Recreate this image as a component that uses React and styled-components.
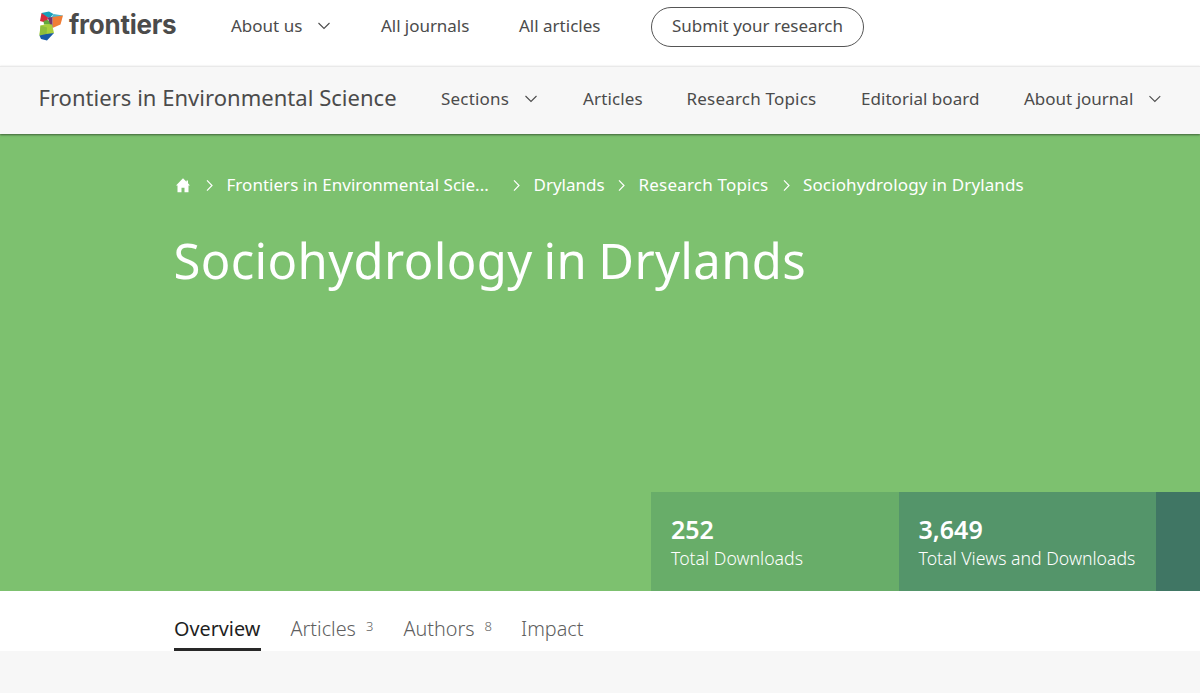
import React from "react";
import styled, { createGlobalStyle } from "styled-components";

const GlobalStyle = createGlobalStyle`
  *, *::before, *::after { box-sizing: border-box; }
  body {
    margin: 0;
    background: #f7f7f7;
    color: #4b4b4b;
    font-family: "Noto Sans", "Open Sans", sans-serif;
    font-size: 17px;
    overflow: hidden;
  }
`;

const Page = styled.div`
  width: 1200px;
  height: 693px;
  overflow: hidden;
  white-space: nowrap;
`;

const TopBar = styled.header`
  display: flex;
  align-items: flex-start;
  height: 66px;
  padding-left: 38px;
  background: #fff;
`;

const Brand = styled.a`
  display: flex;
  align-items: center;
  width: 193px;
  height: 51px;
`;

const BrandName = styled.span`
  margin-left: 6px;
  padding-bottom: 1px;
  font-family: Inter, "Noto Sans", sans-serif;
  font-size: 26px;
  font-weight: 700;
  letter-spacing: -0.25px;
  line-height: 30px;
`;

const NavLink = styled.a`
  display: flex;
  align-items: center;
  flex: none;
  width: ${(p) => p.$width}px;
  height: ${(p) => p.$height || 51}px;
  letter-spacing: ${(p) => p.$track || 0}px;

  svg { margin: 1px 0 0 15px; }
`;

const SubmitButton = styled.a`
  display: flex;
  align-items: center;
  justify-content: center;
  width: 213px;
  height: 40px;
  margin-top: 6.5px;
  padding-bottom: 2px;
  border: 1.5px solid #555;
  border-radius: 20px;
`;

const JournalBar = styled.nav`
  display: flex;
  position: relative;
  height: 68px;
  padding-left: 38.5px;
  border-top: 1px solid #e9e9e9;
  background: #f7f7f7;
  box-shadow: 0 1px 2px rgba(0, 0, 0, 0.5);
`;

const JournalName = styled.a`
  display: flex;
  align-items: center;
  width: 402.5px;
  height: 60px;
  font-size: 22px;
  letter-spacing: 0.03px;
`;

const Hero = styled.section`
  display: flex;
  flex-direction: column;
  justify-content: space-between;
  height: 457px;
  padding-left: 174px;
  background: #7dc16f;
  color: #fff;
`;

const Crumbs = styled.div`
  display: flex;
  align-items: center;
  height: 24px;
  margin-top: 39px;
`;

const Crumb = styled.a`
  width: ${(p) => p.$width}px;
  padding-bottom: 2px;
  letter-spacing: ${(p) => p.$track || 0}px;
`;

const Separator = styled.svg`
  flex: none;
  margin-right: 12.5px;
`;

const Title = styled.h1`
  margin: 29px 0 0 -0.5px;
  font-size: 49px;
  font-weight: 400;
  letter-spacing: 0.35px;
  line-height: 68px;
  word-spacing: -2px;
`;

const Stats = styled.div`
  display: flex;
  height: 99px;
  margin-left: 477px;
`;

const Stat = styled.div`
  flex: none;
  width: ${(p) => p.$width}px;
  padding: 20px 0 0 20px;
  background: ${(p) => p.$color};
`;

const StatValue = styled.div`
  font-size: 25px;
  font-weight: 600;
  line-height: 34px;
`;

const StatLabel = styled.div`
  font-size: 17.7px;
  font-weight: 300;
  line-height: 25px;
`;

const Tabs = styled.div`
  display: flex;
  height: 60px;
  padding-left: 174px;
  background: #fff;
`;

const Tab = styled.a`
  height: 60px;
  width: ${(p) => p.$width}px;
  margin-right: 29.5px;
  border-bottom: ${(p) => (p.$active ? "3px solid #282828" : "0")};
  color: ${(p) => (p.$active ? "#1f1f1f" : "#5f5f5f")};
  font-size: 19.8px;
  font-weight: ${(p) => (p.$active ? 400 : 300)};
  line-height: 75px;
`;

const Count = styled.sup`
  margin-left: 10px;
  font-size: 13px;
  line-height: 0;
  vertical-align: 5px;
`;

const Chevron = () => (
  <svg width="14" height="8" viewBox="0 0 14 8" fill="none" stroke="#4b4b4b" strokeWidth="1.1">
    <path d="M1.5 1 7 6.5 12.5 1" />
  </svg>
);

const CrumbArrow = () => (
  <Separator width="8" height="13" viewBox="0 0 8 13" fill="none" stroke="#fff" strokeWidth="1.2">
    <path d="M1 1.3 6 6.5 1 11.7" />
  </Separator>
);

const HomeIcon = styled.svg`
  flex: none;
  margin: 0 16px 0 2px;
`;

const LogoMark = () => (
  <svg width="25" height="30" viewBox="0 0 25 30">
    <path d="M3.5 2 11 .5 15.5 3 12 7 5.5 5Z" fill="#169fba" />
    <path d="M3.5 2 10 6.5 9 12 2 10Z" fill="#d62b3c" />
    <path d="M5.5 10 9.5 9 13.5 11.5 13.5 14 6 13.5Z" fill="#61a83c" />
    <path d="M15.5 3 25 4.5 21.5 6.5 13.5 6.5Z" fill="#4bb6cd" />
    <path d="M14.5 6 25 4.5 22.5 13.5 14.5 17Z" fill="#f07d35" />
    <path d="M9.5 6.5 14.5 6 14.5 17 12.5 14Z" fill="#74366f" />
    <path d="M2.5 14.5 9 13 14 13.5 16 22 8.5 24.5 1.5 24.5Z" fill="#a8cf3d" />
    <path d="M2.5 14.5 9 16.5 8.5 24.5 1.5 24.5Z" fill="#8dbd3c" />
    <path d="M1.5 24.5 8.5 23 16 22 9 29.5 3 28Z" fill="#1859a6" />
  </svg>
);

export default function App() {
  return (
    <Page>
      <GlobalStyle />
      <TopBar>
        <Brand>
          <LogoMark />
          <BrandName>frontiers</BrandName>
        </Brand>
        <NavLink $width={150}>About us<Chevron /></NavLink>
        <NavLink $width={138} $track={-0.05}>All journals</NavLink>
        <NavLink $width={132}>All articles</NavLink>
        <SubmitButton>Submit your research</SubmitButton>
      </TopBar>
      <JournalBar>
        <JournalName>Frontiers in Environmental Science</JournalName>
        <NavLink $height={63} $width={142} $track={0.2}>Sections<Chevron /></NavLink>
        <NavLink $height={63} $width={103.5} $track={0.15}>Articles</NavLink>
        <NavLink $height={63} $width={174.5} $track={0.2}>Research Topics</NavLink>
        <NavLink $height={63} $width={163} $track={0.04}>Editorial board</NavLink>
        <NavLink $height={63} $width={138}>About journal<Chevron /></NavLink>
      </JournalBar>
      <Hero>
        <div>
          <Crumbs>
            <HomeIcon width="14" height="15" viewBox="0 0 14 15" fill="#fff">
              <path d="M7 0.3 10.5 3.8V2.5H12V5.3L14 7.5H12.5V14.3H8.5V9.8H5.5V14.3H1.5V7.5H0Z" />
            </HomeIcon>
            <CrumbArrow />
            <Crumb $width={286.5} $track={0.03}>Frontiers in Environmental Scie...</Crumb>
            <CrumbArrow />
            <Crumb $width={84.5}>Drylands</Crumb>
            <CrumbArrow />
            <Crumb $width={144} $track={0.2}>Research Topics</Crumb>
            <CrumbArrow />
            <Crumb $width={230} $track={0.12}>Sociohydrology in Drylands</Crumb>
          </Crumbs>
          <Title>Sociohydrology in Drylands</Title>
        </div>
        <Stats>
          <Stat $width={247.5} $color="#68ad69">
            <StatValue>252</StatValue>
            <StatLabel>Total Downloads</StatLabel>
          </Stat>
          <Stat $width={257.5} $color="#54956a">
            <StatValue>3,649</StatValue>
            <StatLabel>Total Views and Downloads</StatLabel>
          </Stat>
          <Stat $width={44} $color="#407664" />
        </Stats>
      </Hero>
      <Tabs>
        <Tab $active $width={87}>Overview</Tab>
        <Tab $width={83.5}>Articles<Count>3</Count></Tab>
        <Tab $width={88}>Authors<Count>8</Count></Tab>
        <Tab $width={64}>Impact</Tab>
      </Tabs>
    </Page>
  );
}
